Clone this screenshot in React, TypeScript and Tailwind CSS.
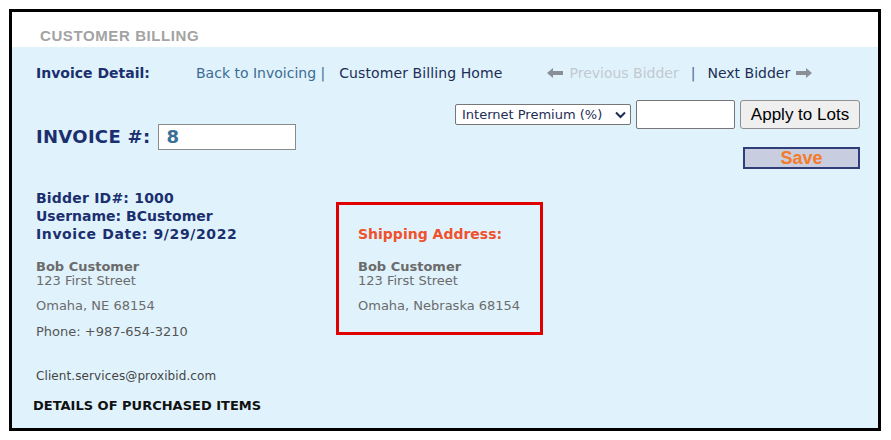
import React from "react";

const V = { fontFamily: '"DejaVu Sans", Verdana, sans-serif' };
const A = { fontFamily: '"Liberation Sans", Arial, sans-serif' };

function ArrowLeft() {
  return (
    <svg width="16" height="10" viewBox="0 0 16 10" className="inline-block">
      <path d="M0 5 L6 0 L6 3 L16 3 L16 7 L6 7 L6 10 Z" fill="#8a8f96" />
    </svg>
  );
}
function ArrowRight() {
  return (
    <svg width="16" height="10" viewBox="0 0 16 10" className="inline-block">
      <path d="M16 5 L10 0 L10 3 L0 3 L0 7 L10 7 L10 10 Z" fill="#8a8f96" />
    </svg>
  );
}

export default function App() {
  return (
    <div className="w-[891px] h-[440px] bg-white pt-[9px] pl-[9px]" style={V}>
      <div className="w-[872px] h-[422px] border-[3px] border-black flex flex-col">
        <div className="h-[35px] bg-white flex items-end pl-[28px] pb-[2px]">
          <span className="text-[15px] font-bold text-[#a3a3a3] leading-[18px] tracking-[0.6px]" style={A}>
            CUSTOMER BILLING
          </span>
        </div>
        <div className="flex-1 bg-[#e0f3fd] flex flex-col pl-[24px]">
          {/* nav row */}
          <div className="flex items-center h-[18px] mt-[17px] text-[14px]">
            <span className="font-bold text-[#1b2f6e] w-[160px]">Invoice Detail:</span>
            <span className="text-[#3d6b94]">Back to Invoicing |</span>
            <span className="text-[#1c2d55] ml-[14px] tracking-[0.1px]">Customer Billing Home</span>
            <span className="ml-[45px] flex items-center gap-[6px]">
              <ArrowLeft />
              <span className="text-[#c2c9cf]">Previous Bidder</span>
            </span>
            <span className="text-[#3d6b94] ml-[12px]">|</span>
            <span className="text-[#1c2d55] ml-[12px]">Next Bidder</span>
            <span className="ml-[6px] flex items-center">
              <ArrowRight />
            </span>
          </div>
          {/* invoice + controls */}
          <div className="flex justify-between pr-[18px] mt-[18px]">
            <div className="flex items-center mt-[24px] h-[26px]">
              <span className="text-[18px] font-bold text-[#1b2f6e] leading-[22px] tracking-[0.3px]">INVOICE #:</span>
              <div className="ml-[8px] w-[138px] h-[26px] border border-[#8a8a8a] bg-white flex items-center pl-[7px]">
                <span className="text-[18px] font-bold text-[#3a6f96] leading-[22px]">8</span>
              </div>
            </div>
            <div className="flex flex-col items-end">
              <div className="flex items-center gap-[5px]">
                <div className="w-[176px] h-[21px] border border-[#767676] bg-white rounded-[2px] flex items-center pl-[6px] pr-[4px] justify-between">
                  <span className="text-[13px] text-[#1c2d55] leading-[16px]">Internet Premium (%)</span>
                  <svg width="11" height="8" viewBox="0 0 11 8">
                    <path d="M1 1.5 L5.5 6 L10 1.5" fill="none" stroke="#1c2d55" strokeWidth="2" />
                  </svg>
                </div>
                <div className="w-[99px] h-[29px] border border-[#767676] bg-white rounded-[2px]" />
                <div
                  className="w-[120px] h-[29px] border border-[#8f8f8f] bg-[#efefef] rounded-[3px] flex items-center justify-center text-[17px] text-black"
                  style={A}
                >
                  Apply to Lots
                </div>
              </div>
              <div
                className="mt-[18px] w-[117px] h-[22px] border-2 border-[#2f3e78] bg-[#c9cde0] flex items-center justify-center text-[18px] font-bold text-[#f47b2a] leading-[18px]"
                style={A}
              >
                Save
              </div>
            </div>
          </div>
          {/* info section */}
          <div className="flex mt-[20px]">
            <div className="w-[300px] flex flex-col">
              <div className="text-[14px] font-bold text-[#1b2f6e] leading-[18px]">
                <div className="tracking-[0.2px]">Bidder ID#: 1000</div>
                <div>Username: BCustomer</div>
                <div className="tracking-[0.6px]">Invoice Date: 9/29/2022</div>
              </div>
              <div className="mt-[17px] text-[13px] text-[#6b6b6b] leading-[14px]">
                <div className="font-bold">Bob Customer</div>
                <div>123 First Street</div>
              </div>
              <div className="mt-[10px] text-[13px] text-[#6b6b6b] leading-[16px]">Omaha, NE 68154</div>
              <div className="mt-[10px] text-[13px] text-[#555] leading-[16px]">Phone: +987-654-3210</div>
            </div>
            <div className="mt-[13px] w-[207px] h-[133px] border-[3px] border-[#e00000] pl-[19px]">
              <div className="mt-[20px] text-[14px] font-bold text-[#f0512d] leading-[18px]">Shipping Address:</div>
              <div className="mt-[17px] text-[13px] text-[#6b6b6b] leading-[14px]">
                <div className="font-bold">Bob Customer</div>
                <div>123 First Street</div>
              </div>
              <div className="mt-[10px] text-[13px] text-[#6b6b6b] leading-[16px]">Omaha, Nebraska 68154</div>
            </div>
          </div>
          <div className="mt-[28px] text-[12px] text-[#444] leading-[16px] tracking-[0.1px]">Client.services@proxibid.com</div>
          <div className="mt-[14px] -ml-[3px] text-[13px] font-bold text-[#111] leading-[16px]">DETAILS OF PURCHASED ITEMS</div>
        </div>
      </div>
    </div>
  );
}
